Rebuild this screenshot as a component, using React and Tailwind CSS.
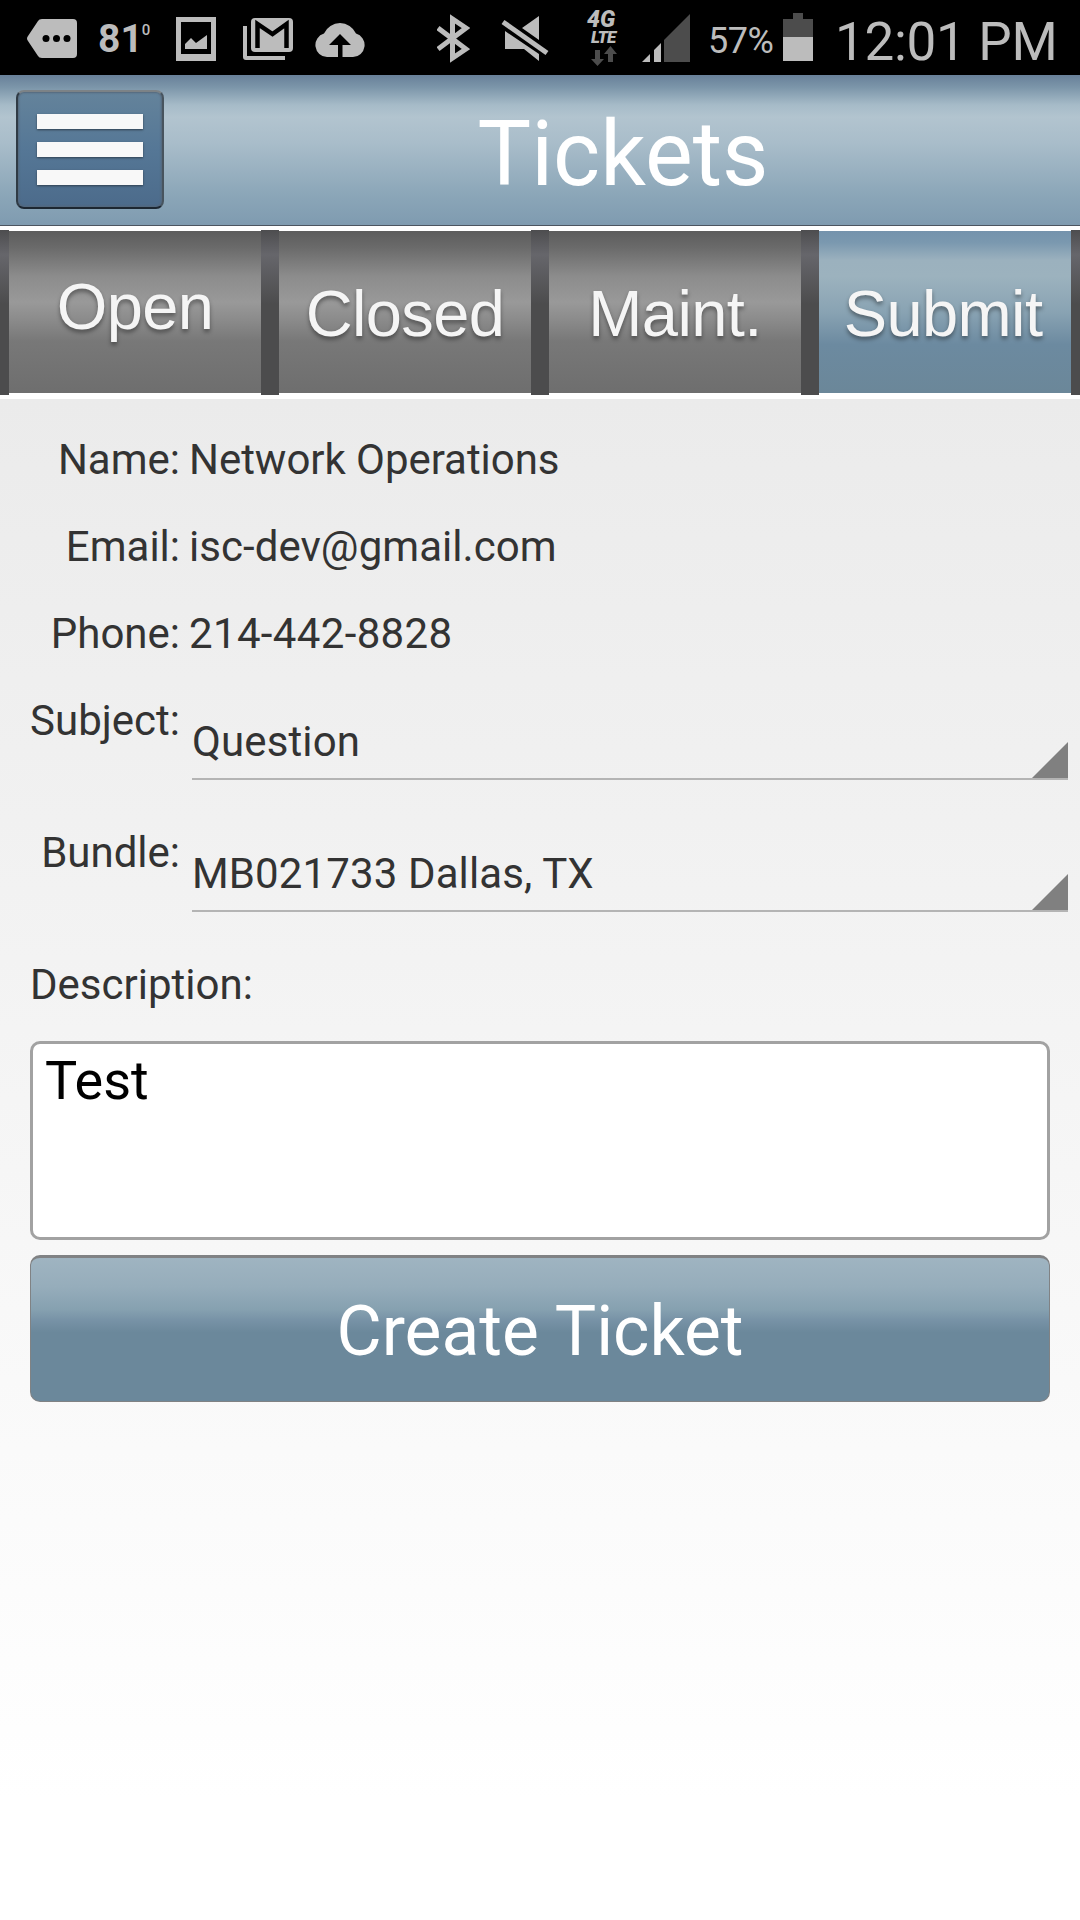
import { useState } from 'react'

const tabs = [
  { id: 'open', label: 'Open', pad: 'pb-[10px]' },
  { id: 'closed', label: 'Closed', pad: 'pt-[3px]' },
  { id: 'maint', label: 'Maint.', pad: 'pt-[3px]' },
  { id: 'submit', label: 'Submit', pad: 'pt-[3px] pr-[4px]' },
]

const contact = [
  { label: 'Name:', value: 'Network Operations', spacing: 'tracking-[-0.04px]' },
  { label: 'Email:', value: 'isc-dev@gmail.com', spacing: 'tracking-[0.05px]' },
  { label: 'Phone:', value: '214-442-8828', spacing: 'tracking-[0.35px]' },
]

function StatusBar() {
  return (
    <div className="flex h-[75px] items-start bg-black text-[#bcbcbc]">
      {/* Notifications */}
      <svg className="mt-[19px] ml-[27px] h-[39px] w-[50px] shrink-0" viewBox="0 0 50 39" fill="#bcbcbc">
        <path d="M15 0H46Q50 0 50 4V35Q50 39 46 39H15Q12 39 11 37L1 22Q-1 19.500 1 17L11 2Q12 0 15 0Z" />
        <g fill="#000">
          <circle cx="19" cy="19.500" r="3.500" />
          <circle cx="29.500" cy="19.500" r="3.500" />
          <circle cx="40" cy="19.500" r="3.500" />
        </g>
      </svg>
      <div className="ml-[21px] flex w-[54px] shrink-0 pt-[16px] text-[39px] leading-[46px] font-bold">
        81<span className="-ml-[1px] pt-[4px] text-[15px] leading-[20px] font-medium">0</span>
      </div>
      <svg className="mt-[17px] ml-[24px] h-[44px] w-[40px] shrink-0" viewBox="0 0 40 44">
        <path fill="#bcbcbc" fillRule="evenodd" d="M0 0H40V44H0ZM5 5V37H35V5Z" />
        <path fill="#bcbcbc" d="M9 32V27L15 21L20 26L31 18V32Z" />
      </svg>
      <svg className="mt-[17px] ml-[27px] h-[44px] w-[50px] shrink-0" viewBox="0 0 50 44">
        <rect x="8" y="1" width="42" height="34" rx="4" fill="#bcbcbc" />
        <path d="M14.500 31V7L29.500 17L43.500 7V31" fill="none" stroke="#000" strokeWidth="4.500" />
        <path d="M0 9H4V39H42V43H3Q0 43 0 40Z" fill="#bcbcbc" />
      </svg>
      <svg className="mt-[21px] ml-[22px] h-[36px] w-[50px] shrink-0" viewBox="0 0 50 36">
        <path fill="#bcbcbc" d="M12 36A12 12 0 0 1 9 12.500A17.500 17.500 0 0 1 41 12.500A12 12 0 0 1 38 36Z" />
        <path fill="#000" d="M25 13L36 24H27.500V36H23V24H14Z" />
      </svg>

      {/* System */}
      <svg className="mt-[14px] ml-[72px] h-[49px] w-[33px] shrink-0" viewBox="0 0 33 49" fill="none" stroke="#bcbcbc" strokeWidth="5">
        <path d="M1 14L29 35L15.500 44V5L29 14L1 35" />
      </svg>
      <svg className="mt-[15px] ml-[31px] h-[47px] w-[48px] shrink-0" viewBox="0 0 48 47" fill="#bcbcbc">
        <path d="M38 1V25L21 13ZM4 16L38 39V46L23 34H4Z" />
        <path d="M2 7L46 38" stroke="#bcbcbc" strokeWidth="5" />
      </svg>
      <div className="ml-[38px] flex w-[32px] shrink-0 flex-col items-start pt-[9px] font-black italic">
        <span className="text-[23px] leading-[22px]">4G</span>
        <span className="pl-[4px] text-[17px] leading-[13px] tracking-[-0.8px]">LTE</span>
        <svg className="mt-[2px] ml-[4px] h-[20px] w-[26px]" viewBox="0 0 26 20" fill="#4c4c4c">
          <path d="M4 4H9V13H13L6.500 20L0 13H4ZM17 16H22V8H26L19.500 0L13 8H17Z" />
        </svg>
      </div>
      <svg className="mt-[14px] ml-[23px] h-[48px] w-[48px] shrink-0" viewBox="0 0 48 48">
        <path fill="#4c4c4c" d="M22 26L48 0V48H22Z" />
        <path fill="#bcbcbc" d="M0 48L8 40V48ZM12 36L19 29V48H12Z" />
      </svg>
      <span className="ml-[18px] w-[66px] shrink-0 pt-[19px] text-[36px] leading-[44px] tracking-[-0.5px]">57%</span>
      <svg className="mt-[13px] ml-[9px] h-[48px] w-[30px] shrink-0" viewBox="0 0 30 48">
        <path fill="#4c4c4c" d="M10 0H20V6H30V24H0V6H10Z" />
        <rect y="24" width="30" height="24" fill="#bcbcbc" />
      </svg>
      <span className="ml-[22px] pt-[10px] text-[53px] leading-[64px] tracking-[-0.3px] whitespace-nowrap">12:01 PM</span>
    </div>
  )
}

function Header() {
  return (
    <header className="flex h-[151px] border-b border-[#4c5560] bg-[linear-gradient(#688099_0%,#7b95a9_8%,#a6bbc8_20%,#b2c4cf_28%,#a9bdca_45%,#8ba6b8_80%,#7f9bb0_100%)] pt-[15px] pl-[16px]">
      <button className="flex h-[119px] w-[148px] shrink-0 flex-col gap-[13px] rounded-[8px] border-2 border-t-[#7c8286] border-r-[#48545e] border-b-[#1c2732] border-l-[#303b45] bg-[linear-gradient(#64839b,#557796_50%,#4c6b8b)] px-[19px] pt-[22px] shadow-[inset_0_0_2px_1px_#55677a]">
        <span className="h-[15px] w-[106px] bg-[#f8f8f8] shadow-[0_1px_2px_#304050]" />
        <span className="h-[15px] w-[106px] bg-[#f8f8f8] shadow-[0_1px_2px_#304050]" />
        <span className="h-[15px] w-[106px] bg-[#f8f8f8] shadow-[0_1px_2px_#304050]" />
      </button>
      <h1 className="flex-1 pl-[2px] text-center text-[90px] leading-[130px] text-white">Tickets</h1>
    </header>
  )
}

function Tabs({ active, onChange }) {
  return (
    <nav className="grid h-[173px] grid-cols-4 bg-white pt-[4px] pb-[4px]">
      {tabs.map((tab) => (
        <button
          key={tab.id}
          onClick={() => onChange(tab.id)}
          className="h-[165px] bg-[linear-gradient(#4d4d4f,#66666b_15%,#4c4c4d_45%,#4c4c4d)] px-[9px]"
        >
          <span className="block h-full border-t border-b-2 border-white">
            <span
              className={`flex h-full items-center justify-center font-['Liberation_Sans',sans-serif] text-[65px] leading-[74px] tracking-[-0.6px] text-[#f5f5f5] [text-shadow:0_3px_4px_rgba(0,0,0,0.4)] ${tab.pad} ${
                tab.id === active
                  ? 'bg-[linear-gradient(#7593ac_0%,#7a98af_7%,#9bb1be_18%,#9cb2be_28%,#89a3b3_50%,#6c8aa0_70%,#6b8799_100%)]'
                  : 'bg-[linear-gradient(#5c5c5c_0%,#6a6a6a_10%,#8c8c8c_28%,#999_44%,#8c8c8c_54%,#787878_68%,#6e6e6e_100%)]'
              }`}
            >
              {tab.label}
            </span>
          </span>
        </button>
      ))}
    </nav>
  )
}

function SelectRow({ label, value }) {
  return (
    <div className="flex h-[132px]">
      <span className="w-[180px] shrink-0 text-right">{label}</span>
      <div className="mt-[21px] ml-[12px] flex h-[64px] w-[876px] justify-between border-b-2 border-[#b4b4b4]">
        <span className="tracking-[0.12px]">{value}</span>
        <svg className="mt-[26px] h-[36px] w-[36px]" viewBox="0 0 36 36" fill="#808080">
          <path d="M36 0V36H0Z" />
        </svg>
      </div>
    </div>
  )
}

export default function App() {
  const [active, setActive] = useState('submit')
  const [description, setDescription] = useState('Test')

  return (
    <div className="h-[1920px] w-[1080px] overflow-hidden bg-[linear-gradient(#ebebeb_399px,#fff_1800px)] font-[Roboto,sans-serif]">
      <StatusBar />
      <Header />
      <Tabs active={active} onChange={setActive} />

      {/* Ticket form */}
      <main className="pt-[35px] text-[42px] leading-[52px] text-[#333]">
        {contact.map((row) => (
          <div key={row.label} className="flex h-[87px]">
            <span className="w-[180px] shrink-0 text-right">{row.label}</span>
            <span className={`ml-[9px] ${row.spacing}`}>{row.value}</span>
          </div>
        ))}
        <SelectRow label="Subject:" value="Question" />
        <SelectRow label="Bundle:" value="MB021733 Dallas, TX" />

        <div className="flex flex-col px-[30px]">
          <label htmlFor="description">Description:</label>
          <textarea
            id="description"
            value={description}
            onChange={(e) => setDescription(e.target.value)}
            className="mt-[30px] block h-[199px] resize-none rounded-[10px] border-3 border-[#a2a2a2] bg-white px-[12px] pt-[3px] text-[54px] leading-[68px] text-black outline-none"
          />
          <button className="mt-[15px] h-[147px] rounded-[10px] border border-t-3 border-[#808284] bg-[linear-gradient(#9fb4c1_0%,#96adbb_20%,#86a1b0_36%,#7893a7_43%,#6b889b_52%,#6b889b_100%)] pt-[5px] text-[69.5px] text-white">
            Create Ticket
          </button>
        </div>
      </main>
    </div>
  )
}
